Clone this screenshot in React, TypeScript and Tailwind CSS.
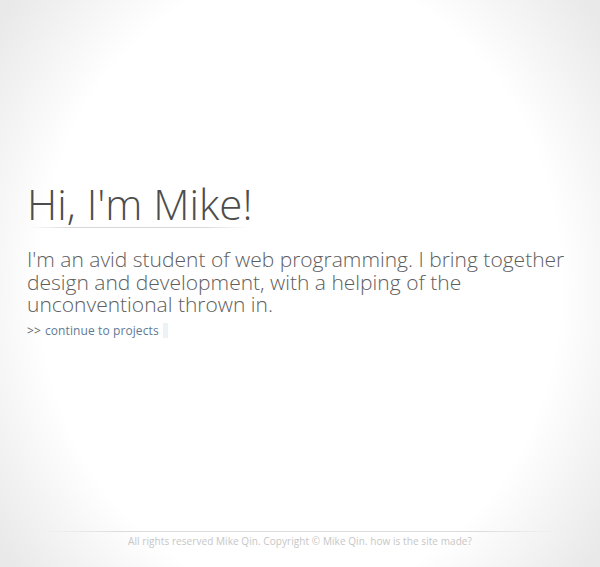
import React from "react";

const App = () => {
	return (
		<div
			className="flex flex-col w-[600px] h-[567px] overflow-hidden bg-[radial-gradient(ellipse_62%_78%_at_50%_50%,#ffffff_70%,#e9e9e9_100%)]"
			style={{ fontFamily: '"Open Sans", "Liberation Sans", sans-serif' }}
		>
			<div className="flex flex-col flex-1 pt-[180px] pl-[27px] pr-[20px]">
				<div className="w-[222px] bg-[linear-gradient(to_right,#ffffff,#d8d8d8_20%,#d8d8d8_80%,#ffffff)] bg-no-repeat bg-bottom bg-[length:100%_1px]">
					<h1 className="font-light text-[42px] leading-[48px] text-[#4d4d4d] whitespace-nowrap">
						Hi, I'm Mike!
					</h1>
				</div>
				<p className="mt-[20px] font-light text-[21px] leading-[22.5px] text-[#5e5e5e]">
					I'm an avid student of web programming. I bring together design and development, with a helping of the unconventional thrown in.
				</p>
				<div className="flex items-center gap-[4px] mt-[7px] text-[12px] leading-[16px] tracking-[0.1px]">
					<span className="text-[#666]">&gt;&gt;</span>
					<span className="text-[#5f7a94]">continue to projects</span>
					<span className="w-[5px] h-[15px] bg-[#edf2f7]"></span>
				</div>
			</div>
			<div className="flex flex-col items-center pb-[19px]">
				<div className="w-[520px] h-[1px] bg-[linear-gradient(to_right,transparent,#dcdcdc_15%,#dcdcdc_85%,transparent)]"></div>
				<p className="mt-[2px] text-[10px] leading-[14px] tracking-[0.07px] text-[#c6c6c6]">
					All rights reserved Mike Qin. Copyright © Mike Qin. how is the site made?
				</p>
			</div>
		</div>
	);
};

export default App;
